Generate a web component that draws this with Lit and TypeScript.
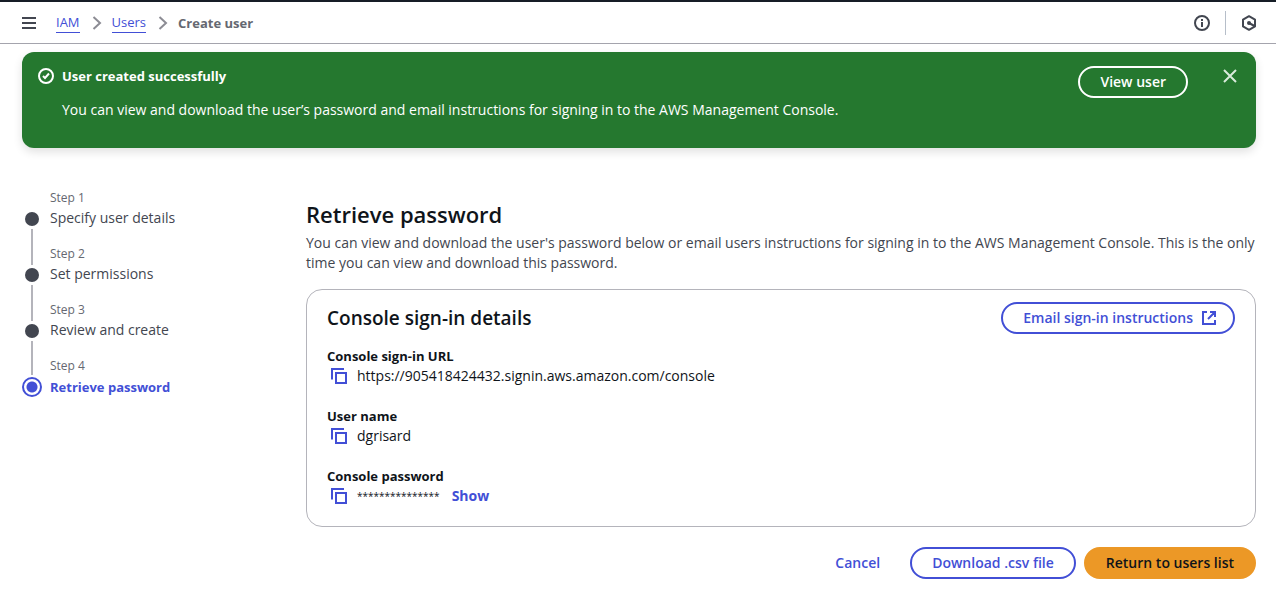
import { LitElement, html, css, svg } from "lit";
import { customElement, state } from "lit/decorators.js";
import { classMap } from "lit/directives/class-map.js";

const icon = (content: unknown, size = 16) => html`<svg
  class="icon" width=${size} height=${size} viewBox=${`0 0 ${size} ${size}`} fill="none"
  stroke="currentColor" stroke-width="2" aria-hidden="true">${content}</svg>`;

const menuIcon = svg`<path d="M0 2h14M0 7h14M0 12h14"/>`;
const chevronIcon = svg`<path d="M5.500 2 12 8l-6.500 6"/>`;
const infoIcon = svg`<circle cx="8" cy="8" r="7"/><path d="M8 7v5M8 4v2"/>`;
const hexagonIcon = svg`<path d="M8 1.200 14 4.600v6.800L8 14.800 2 11.400V4.600Z" stroke-linejoin="round"/><circle cx="8" cy="8" r="2" fill="currentColor" stroke="none"/><path d="m8 8 5.500 3"/>`;
const successIcon = svg`<circle cx="8" cy="8" r="7"/><path d="m5 8 2 2 4-4.500"/>`;
const closeIcon = svg`<path d="m2 2 12 12M14 2 2 14"/>`;
const copyIcon = svg`<path d="M1 11.500V1h12"/><path d="M5 5h10v10H5Z"/>`;
const externalIcon = svg`<path d="M6 2H2v12h12v-4M9 2h5v5M13.500 2.500 7 9"/>`;

@customElement("app-root")
export class AppRoot extends LitElement {
  static styles = css`
    :host {
      display: block;
      font: 400 14px/20px "Open Sans", "Noto Sans", sans-serif;
      color: #0f141a;
      background: #fff;
    }
    * { box-sizing: border-box; }
    h1, h2, p, ol, dl, dd { margin: 0; padding: 0; }
    ol { list-style: none; }
    button { font: inherit; color: inherit; border: 0; background: none; padding: 0; cursor: pointer; }
    .icon { display: block; flex: none; }

    .topbar {
      display: flex;
      align-items: center;
      justify-content: space-between;
      height: 44px;
      padding: 0 19px 0 22px;
      border-top: 2px solid #161d26;
      border-bottom: 1px solid #a4a4ad;
      color: #424650;
    }
    .crumbs, .crumbs ol, .crumbs li, .tools { display: flex; align-items: center; }
    .crumbs { gap: 20px; font-size: 13px; }
    .crumbs ol, .crumbs li { gap: 8px; }
    .crumbs a { color: #424fd6; text-decoration: none; border-bottom: 1px solid; }
    .crumbs li .icon { color: #8c8c94; }
    .crumbs .current { font-weight: 700; color: #656871; }
    .tools { gap: 15px; }
    .tools .divider { width: 1px; height: 24px; background: #b6bec9; }

    .flash {
      display: flex;
      align-items: flex-start;
      gap: 8px;
      margin: 8px 20px 0 22px;
      min-height: 96px;
      padding: 14px 16px;
      border-radius: 12px;
      background: #25782f;
      color: #fff;
      box-shadow: 0 4px 10px #0000001f;
    }
    .flash > .icon { margin-top: 2px; }
    .flash .text { flex: 1; display: grid; gap: 14px; }
    .flash .title { font-size: 13px; font-weight: 700; }
    .flash .close { padding: 2px; margin-left: 24px; color: #d9ebdc; }

    .button {
      display: inline-flex;
      align-items: center;
      justify-content: center;
      gap: 8px;
      height: 32px;
      padding: 0 20px;
      border: 2px solid;
      border-radius: 20px;
      font-size: 14px;
      font-weight: 600;
      white-space: nowrap;
    }
    .button .icon { margin-right: -4px; }
    .outline, .link { color: #424fd6; }
    .link { border-color: transparent; }
    .primary { color: #0f141a; background: #ec9826; border-color: #ec9826; }

    .layout {
      display: grid;
      grid-template-columns: 260px minmax(0, 1fr);
      gap: 24px;
      padding: 40px 20px 20px 22px;
    }
    .step { display: grid; grid-template-columns: 20px 1fr; column-gap: 8px; }
    .step .caption { grid-column: 2; font-size: 12px; color: #656871; }
    .step .rail { grid-row: 1 / 3; grid-column: 1; display: flex; flex-direction: column; align-items: center; gap: 2px; }
    .step .line { width: 2px; height: 21px; }
    .step:not(:first-child) .line, .step .line.after { background: #b4b4bb; }
    .step .line.after { flex: 1; }
    .step .dot { width: 14px; height: 14px; border-radius: 50%; background: #424650; margin: 1px 0; }
    .step .name { grid-column: 2; color: #424650; margin-bottom: 16px; }
    .step.active .line { height: 19px; }
    .step.active .dot { width: 20px; height: 20px; margin: 0; border: 2px solid #424fd6; background: radial-gradient(#424fd6 5px, #fff 6px); }
    .step.active .name { color: #424fd6; font-size: 13px; font-weight: 700; margin-bottom: 0; }

    .content { padding-top: 11px; }
    h1 { font-size: 22px; line-height: 30px; font-weight: 600; }
    .description { margin-top: 4px; color: #424650; }
    .card {
      margin-top: 16px;
      padding: 12px 20px 20px;
      border: 1px solid #b4b4bb;
      border-radius: 16px;
    }
    .card header { display: flex; align-items: center; justify-content: space-between; }
    h2 { font-size: 19px; line-height: 24px; font-weight: 600; }
    dl { display: grid; gap: 20px; margin-top: 12px; }
    dt { font-size: 13px; font-weight: 700; }
    dd { display: flex; align-items: center; gap: 10px; padding-left: 4px; }
    .copy { color: #424fd6; }
    .masked { font-size: 10px; }
    .show { margin-left: 2px; color: #424fd6; font-weight: 700; }
    .actions { display: flex; justify-content: flex-end; gap: 8px; margin-top: 20px; }
  `;

  @state() private dismissed = false;

  private steps = ["Specify user details", "Set permissions", "Review and create", "Retrieve password"];

  private field(label: string, value: string, masked = false) {
    return html`<div>
      <dt>${label}</dt>
      <dd>
        <button class="copy" aria-label=${`Copy ${label}`}
          @click=${() => navigator.clipboard?.writeText(value)}>${icon(copyIcon)}</button>
        <span class=${classMap({ masked })}>${value}</span>
        ${masked ? html`<button class="show">Show</button>` : null}
      </dd>
    </div>`;
  }

  render() {
    return html`
      <div class="topbar">
        <nav class="crumbs" aria-label="Breadcrumbs">
          <button aria-label="Open navigation">${icon(menuIcon, 14)}</button>
          <ol>
            <li><a href="#iam">IAM</a>${icon(chevronIcon)}</li>
            <li><a href="#users">Users</a>${icon(chevronIcon)}</li>
            <li class="current" aria-current="page">Create user</li>
          </ol>
        </nav>
        <div class="tools">
          <button aria-label="Info">${icon(infoIcon)}</button>
          <span class="divider"></span>
          <button aria-label="Diagnostics">${icon(hexagonIcon)}</button>
        </div>
      </div>
      ${this.dismissed ? null : html`
        <section class="flash" role="status">
          ${icon(successIcon)}
          <div class="text">
            <p class="title">User created successfully</p>
            <p>You can view and download the user’s password and email instructions for signing in to the AWS Management Console.</p>
          </div>
          <button class="button">View user</button>
          <button class="close" aria-label="Dismiss" @click=${() => (this.dismissed = true)}>${icon(closeIcon)}</button>
        </section>`}
      <div class="layout">
        <nav aria-label="Steps">
          <ol>
            ${this.steps.map((name, i) => {
              const active = i === this.steps.length - 1;
              return html`<li class=${classMap({ step: true, active })}>
                <span class="rail"><span class="line"></span><span class="dot"></span>${active ? null : html`<span class="line after"></span>`}</span>
                <span class="caption">Step ${i + 1}</span>
                <span class="name">${name}</span>
              </li>`;
            })}
          </ol>
        </nav>
        <main class="content">
          <h1>Retrieve password</h1>
          <p class="description">You can view and download the user's password below or email users instructions for signing in to the AWS Management Console. This is the only time you can view and download this password.</p>
          <section class="card">
            <header>
              <h2>Console sign-in details</h2>
              <button class="button outline">Email sign-in instructions ${icon(externalIcon)}</button>
            </header>
            <dl>
              ${this.field("Console sign-in URL", "https://905418424432.signin.aws.amazon.com/console")}
              ${this.field("User name", "dgrisard")}
              ${this.field("Console password", "***************", true)}
            </dl>
          </section>
          <div class="actions">
            <button class="button link">Cancel</button>
            <button class="button outline">Download .csv file</button>
            <button class="button primary">Return to users list</button>
          </div>
        </main>
      </div>`;
  }
}
